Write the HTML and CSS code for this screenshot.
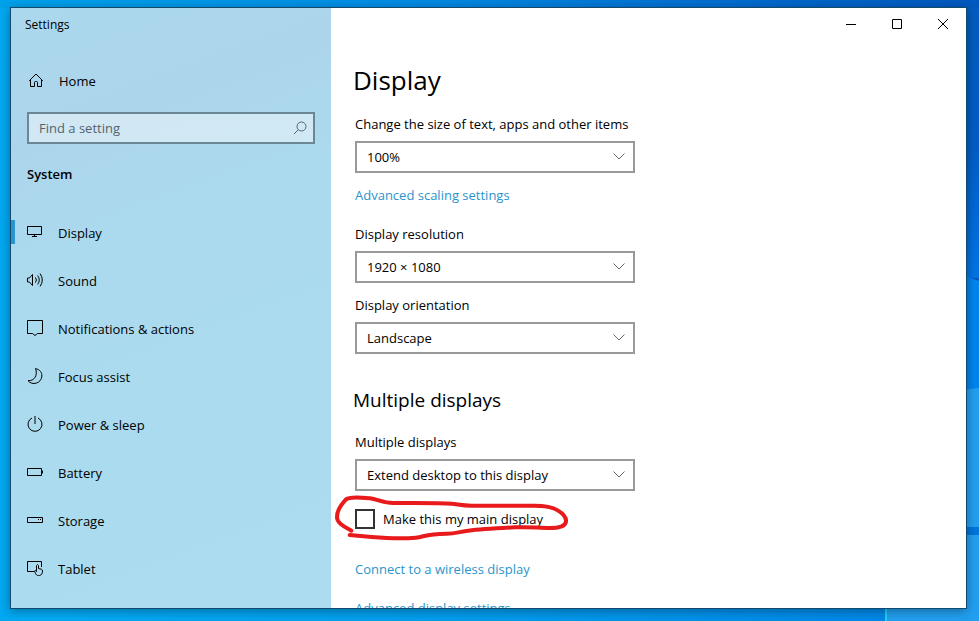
FILE: index.html
```html
<!DOCTYPE html>
<html lang="en">
<head>
    <meta charset="UTF-8">
    <meta name="viewport" content="width=device-width, initial-scale=1.0">
    <title>Settings</title>
    <link rel="stylesheet" href="styles.css">
</head>
<body>
    <svg class="wallpaper" viewBox="0 0 979 621" preserveAspectRatio="none" aria-hidden="true">
        <defs>
            <linearGradient id="sky" x1="0" y1="0" x2="1" y2="0">
                <stop offset="0" stop-color="#00a2ec"/>
                <stop offset="0.4" stop-color="#008ee6"/>
                <stop offset="0.8" stop-color="#0068cc"/>
                <stop offset="1" stop-color="#0058be"/>
            </linearGradient>
            <linearGradient id="floor" x1="0" y1="0" x2="1" y2="0">
                <stop offset="0" stop-color="#00acf4"/>
                <stop offset="0.5" stop-color="#009ced"/>
                <stop offset="1" stop-color="#0084e8"/>
            </linearGradient>
            <linearGradient id="edge" x1="0" y1="0" x2="0" y2="1">
                <stop offset="0" stop-color="#005cc0"/>
                <stop offset="0.5" stop-color="#005dc6"/>
                <stop offset="1" stop-color="#0074e6"/>
            </linearGradient>
        </defs>
        <rect width="979" height="300" fill="url(#sky)"/>
        <rect y="300" width="979" height="321" fill="url(#floor)"/>
        <rect y="8" width="20" height="613" fill="#00a8f2"/>
        <rect x="950" y="8" width="29" height="270" fill="url(#edge)"/>
        <path d="M950 271 L979 281 V390 H950Z" fill="#0084f0"/>
        <path d="M950 391 L979 388 V621 H887 V600 H950Z" fill="#229ff0"/>
        <rect x="950" y="527" width="29" height="8" fill="#0074dc"/>
        <rect x="885" y="600" width="2" height="21" fill="#22d0f0"/>
    </svg>

    <div class="window">
        <aside class="sidebar">
            <div class="window-title">Settings</div>
            <a class="nav-item home" href="#">
                <svg class="icon" viewBox="0 0 16 16"><path d="M1.2 8.8 L8 2 L14.8 8.8 M2.5 7.5 V14.5 H6.5 V10.5 Q6.5 9.5 7.5 9.5 H8.5 Q9.5 9.5 9.5 10.5 V14.5 H13.5 V7.5"/></svg>
                Home
            </a>
            <div class="search">
                <input type="text" placeholder="Find a setting" aria-label="Find a setting">
                <svg class="search-icon" viewBox="0 0 14 14"><circle cx="8.5" cy="5.5" r="4.5"/><path d="M5.2 8.8 L1 13"/></svg>
            </div>
            <h2 class="category">System</h2>
            <nav class="nav">
                <a class="nav-item active" href="#">
                    <svg class="icon" viewBox="0 0 16 16"><path d="M0.5 2.5 H14.5 V10.5 H0.5Z M7.5 10.5 V12.5 M5 12.5 H10"/></svg>
                    Display
                </a>
                <a class="nav-item" href="#">
                    <svg class="icon" viewBox="0 0 16 16"><path d="M0.5 6 H2.5 L5.5 2.5 V13.5 L2.5 10 H0.5Z M8.5 5.5 Q10.3 8 8.5 10.5 M10.7 3.5 Q13.8 8 10.7 12.5 M13 1.5 Q17.6 8 13 14.5"/></svg>
                    Sound
                </a>
                <a class="nav-item" href="#">
                    <svg class="icon" viewBox="0 0 16 16"><path d="M0.5 0.5 H15.5 V13.5 H10.5 L8 15.5 L5.5 13.5 H0.5Z"/></svg>
                    Notifications &amp; actions
                </a>
                <a class="nav-item" href="#">
                    <svg class="icon" viewBox="0 0 16 16"><path d="M8.5 0.6 C13 1.5 15 4.5 14.9 8 C14.5 15.5 5 18 1 12.6 C7.5 13.3 11 7 8.5 0.6Z"/></svg>
                    Focus assist
                </a>
                <a class="nav-item" href="#">
                    <svg class="icon" viewBox="0 0 16 16"><path d="M8 0 V8 M5 2 A7 7 0 1 0 11 2"/></svg>
                    Power &amp; sleep
                </a>
                <a class="nav-item" href="#">
                    <svg class="icon" viewBox="0 0 16 16"><path d="M0.5 4.5 H14.5 V11.5 H0.5Z M15.5 6.5 V9.5"/></svg>
                    Battery
                </a>
                <a class="nav-item" href="#">
                    <svg class="icon" viewBox="0 0 16 16"><path d="M0.5 5.5 H15.5 V10.5 H0.5Z M11 7.5 H12 M13 7.5 H14"/></svg>
                    Storage
                </a>
                <a class="nav-item" href="#">
                    <svg class="icon" viewBox="0 0 16 16"><path d="M7 11.5 H0.5 V1.5 H14.5 V7 M9.5 11.5 V5.5 Q10.5 3.5 11.5 5.5 V8.5 L14.5 9.3 Q15.5 9.7 15.5 11 C15.5 17 9.5 16.5 8.5 13.5 L7.5 11 Q8.3 9.7 9.5 11.5"/></svg>
                    Tablet
                </a>
            </nav>
        </aside>

        <main class="main">
            <div class="window-controls">
                <button class="control" aria-label="Minimize"><svg viewBox="0 0 10 10"><path d="M0 5.5 H10"/></svg></button>
                <button class="control" aria-label="Maximize"><svg viewBox="0 0 10 10"><path d="M0.5 0.5 H9.5 V9.5 H0.5Z"/></svg></button>
                <button class="control" aria-label="Close"><svg viewBox="0 0 10 10"><path d="M0 0 L10 10 M10 0 L0 10"/></svg></button>
            </div>
            <div class="content">
                <h1>Display</h1>

                <div class="field">
                    <label for="scale">Change the size of text, apps and other items</label>
                    <div class="select">
                        <select id="scale"><option>100%</option></select>
                        <svg viewBox="0 0 12 7"><path d="M0.5 0.5 L6 6 L11.5 0.5"/></svg>
                    </div>
                </div>
                <a class="link" href="#">Advanced scaling settings</a>

                <div class="field spaced">
                    <label for="resolution">Display resolution</label>
                    <div class="select">
                        <select id="resolution"><option>1920 × 1080</option></select>
                        <svg viewBox="0 0 12 7"><path d="M0.5 0.5 L6 6 L11.5 0.5"/></svg>
                    </div>
                </div>
                <div class="field">
                    <label for="orientation">Display orientation</label>
                    <div class="select">
                        <select id="orientation"><option>Landscape</option></select>
                        <svg viewBox="0 0 12 7"><path d="M0.5 0.5 L6 6 L11.5 0.5"/></svg>
                    </div>
                </div>

                <h2>Multiple displays</h2>
                <div class="field">
                    <label for="multiple">Multiple displays</label>
                    <div class="select">
                        <select id="multiple"><option>Extend desktop to this display</option></select>
                        <svg viewBox="0 0 12 7"><path d="M0.5 0.5 L6 6 L11.5 0.5"/></svg>
                    </div>
                </div>
                <div class="checkbox">
                    <input type="checkbox" id="main-display">
                    <label for="main-display">Make this my main display</label>
                    <svg class="marker" viewBox="30 39 705 144" aria-hidden="true"><path d="M79 152 C55 138 36 129 36 112 C36 88 50 74 62 59 C72 48 115 53 135 55 C158 58 175 69 205 69 C260 69 340 68 380 71 C400 73 412 77 440 77 H620 C660 76 680 80 698 91 C715 101 724 114 723 124 C722 138 705 144 675 144 C640 144 610 140 570 142 C510 145 470 147 430 152 C405 155 390 161 365 161 C300 162 300 170 272 173 C225 177 165 173 140 171 L74 165"/></svg>
                </div>

                <a class="link" href="#">Connect to a wireless display</a>
                <a class="link spaced" href="#">Advanced display settings</a>
            </div>
        </main>
    </div>
</body>
</html>
```
FILE: styles.css
```css
* {
    margin: 0;
    padding: 0;
    box-sizing: border-box;
}

body {
    height: 100vh;
    padding: 7px 12px 12px 10px;
    overflow: hidden;
    font-family: 'Open Sans', 'Segoe UI', sans-serif;
    font-size: 13px;
    line-height: 20px;
    color: #000;
    background: #0090e8;
}

.wallpaper {
    position: absolute;
    top: 0;
    left: 0;
    width: 100%;
    height: 100%;
    z-index: -1;
}

.window {
    display: flex;
    height: 100%;
    overflow: hidden;
    background: #fff;
    border: 1px solid #14496e;
    box-shadow: 0 2px 10px rgba(0, 0, 0, 0.35);
}

/* Sidebar */
.sidebar {
    flex: 0 0 320px;
    background: linear-gradient(160deg, #abd8ec 0%, #acd5ec 20%, #abdaee 40%, #abdcef 100%);
}

.window-title {
    height: 32px;
    padding: 0 14px;
    font-size: 12px;
    line-height: 34px;
}

.nav-item {
    display: flex;
    align-items: center;
    gap: 15px;
    height: 48px;
    padding: 0 16px;
    color: #000;
    text-decoration: none;
}

.nav-item.home {
    margin: 17px 0 7px;
    padding-left: 17px;
}

.nav-item.active {
    background: linear-gradient(#2a94cc, #2a94cc) left 11px / 4px 24px no-repeat;
}

.icon {
    flex: none;
    width: 16px;
    height: 16px;
    margin-bottom: 2px;
    fill: none;
    stroke: #000;
}

.search {
    display: flex;
    align-items: center;
    height: 32px;
    margin: 0 16px;
    padding: 0 6px 0 10px;
    background: rgba(255, 255, 255, 0.45);
    border: 2px solid #6b8694;
}

.search input {
    flex: 1;
    border: none;
    outline: none;
    background: none;
    font: inherit;
}

.search input::placeholder {
    color: #51636d;
    opacity: 1;
}

.search-icon {
    width: 14px;
    height: 14px;
    fill: none;
    stroke: #51636d;
}

.category {
    margin: 20px 16px 25px;
    font-size: 13px;
    font-weight: 600;
}

/* Main panel */
.main {
    flex: 1;
    min-width: 0;
}

.window-controls {
    display: flex;
    justify-content: flex-end;
    height: 32px;
}

.control {
    display: flex;
    align-items: center;
    justify-content: center;
    width: 46px;
    border: none;
    background: none;
}

.control svg {
    width: 10px;
    height: 10px;
    fill: none;
    stroke: #000;
}

.content {
    padding: 22px 24px 0;
}

h1,
.content h2 {
    margin-left: -2px;
    font-weight: 400;
}

h1 {
    margin-bottom: 16px;
    font-size: 26px;
    line-height: 36px;
}

.content h2 {
    margin-top: 32px;
    margin-bottom: 18px;
    font-size: 19px;
    line-height: 28px;
}

.field {
    margin-bottom: 12px;
}

.field label {
    display: block;
    margin-bottom: 7px;
}

.select {
    position: relative;
    max-width: 280px;
}

.select select {
    display: block;
    width: 100%;
    height: 32px;
    padding: 0 32px 0 10px;
    appearance: none;
    border: 2px solid #999;
    border-radius: 0;
    background: #fff;
    color: #000;
    font: inherit;
}

.select svg {
    position: absolute;
    top: 12px;
    right: 10px;
    width: 12px;
    height: 7px;
    fill: none;
    stroke: #666;
    pointer-events: none;
}

.link {
    display: block;
    color: #2a94cc;
    text-decoration: none;
}

.spaced {
    margin-top: 19px;
}

.checkbox {
    position: relative;
    display: flex;
    align-items: center;
    gap: 8px;
    margin: 18px 0 30px;
}

.checkbox input {
    width: 20px;
    height: 20px;
    appearance: none;
    border: 2px solid #333;
    background: #fff;
}

.marker {
    position: absolute;
    top: -16px;
    left: -20px;
    width: 235px;
    height: 48px;
    fill: none;
    stroke: #e81a1c;
    stroke-width: 12;
    stroke-linecap: round;
    stroke-linejoin: round;
    pointer-events: none;
}
```
